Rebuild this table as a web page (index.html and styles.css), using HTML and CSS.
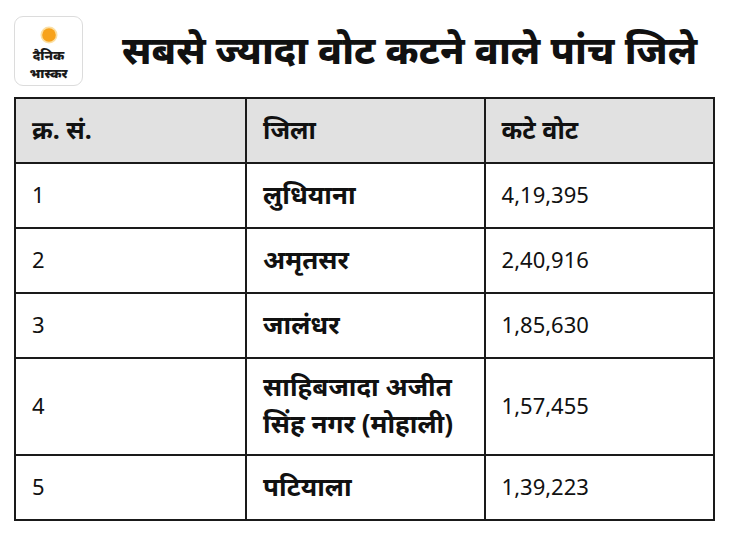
FILE: index.html
```html
<!DOCTYPE html>
<html lang="hi">
<head>
<meta charset="utf-8">
<link rel="stylesheet" href="styles.css">
</head>
<body>
<div class="page">
  <header class="head">
    <div class="logo">
      <svg class="sun" width="18" height="18" viewBox="0 0 18 18">
        <circle cx="9" cy="9" r="8.5" fill="#f7b733" opacity="0.45"/>
        <circle cx="9" cy="9" r="6.8" fill="#f7a21b"/>
      </svg>
      <div class="logo-t">दैनिक<br>भास्कर</div>
    </div>
    <h1 class="title">सबसे ज्यादा वोट कटने वाले पांच जिले</h1>
  </header>
  <table class="tbl">
    <colgroup><col class="c1"><col class="c2"><col class="c3"></colgroup>
    <thead>
      <tr><th>क्र. सं.</th><th>जिला</th><th>कटे वोट</th></tr>
    </thead>
    <tbody>
      <tr><td class="num">1</td><td class="name">लुधियाना</td><td class="num">4,19,395</td></tr>
      <tr><td class="num">2</td><td class="name">अमृतसर</td><td class="num">2,40,916</td></tr>
      <tr><td class="num">3</td><td class="name">जालंधर</td><td class="num">1,85,630</td></tr>
      <tr class="tall"><td class="num">4</td><td class="name two">साहिबजादा अजीत<br>सिंह नगर (मोहाली)</td><td class="num">1,57,455</td></tr>
      <tr><td class="num">5</td><td class="name">पटियाला</td><td class="num">1,39,223</td></tr>
    </tbody>
  </table>
</div>
</body>
</html>
```

FILE: styles.css
```css
html, body {
  margin: 0;
  padding: 0;
  background: #fff;
}
body {
  font-family: "Noto Sans", "Noto Sans Devanagari", "Lohit Devanagari", sans-serif;
  color: #111;
}
.page {
  width: 730px;
  height: 536px;
  padding: 16px 14px 0 14px;
  box-sizing: border-box;
}
.head {
  display: flex;
  align-items: center;
  height: 70px;
  margin-bottom: 11px;
}
.logo {
  width: 69px;
  height: 70px;
  box-sizing: border-box;
  border: 1.5px solid #dcdcdc;
  border-radius: 9px;
  display: flex;
  flex-direction: column;
  align-items: center;
  padding-top: 9px;
  flex: none;
}
.sun {
  display: block;
  margin-bottom: 2px;
}
.logo-t {
  font-weight: 900;
  font-size: 13px;
  line-height: 18px;
  color: #1a1a1a;
  text-align: center;
}
.title {
  margin: 0 0 0 39px;
  font-size: 39px;
  font-weight: 800;
  color: #111;
  line-height: 1;
  padding-bottom: 6px;
  white-space: nowrap;
}
.tbl {
  width: 701px;
  border-collapse: collapse;
  border: 2px solid #1a1a1a;
}
.c1 { width: 232px; }
.c2 { width: 239px; }
.c3 { width: 230px; }
.tbl th, .tbl td {
  border: 2px solid #1a1a1a;
  text-align: left;
  vertical-align: middle;
  padding: 0 0 4px 16px;
  height: 59px;
  line-height: 30px;
}
.tbl th {
  background: #e1e1e1;
  font-weight: 700;
  font-size: 25px;
}
.tbl td.num {
  font-weight: 400;
  font-size: 22px;
}
.tbl td.name {
  font-weight: 700;
  font-size: 26px;
  line-height: 32px;
}
.tbl td.name.two {
  line-height: 37px;
}
.tbl tr.tall td {
  height: 91px;
}
```
